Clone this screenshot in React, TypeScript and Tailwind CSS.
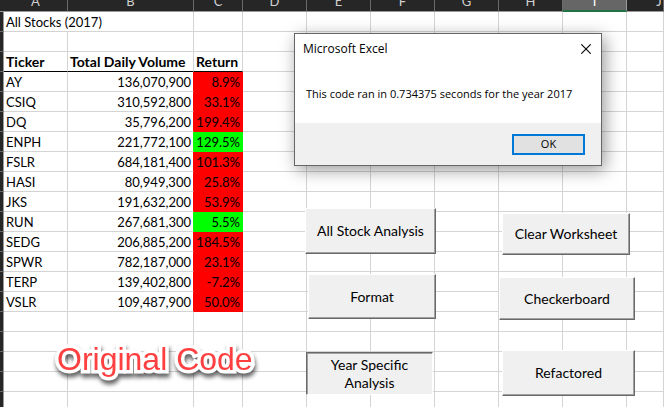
import React from "react";

type Stock = { ticker: string; volume: string; change: string; positive?: boolean };

const stocks: Stock[] = [
  { ticker: "AY", volume: "136,070,900", change: "8.9%" },
  { ticker: "CSIQ", volume: "310,592,800", change: "33.1%" },
  { ticker: "DQ", volume: "35,796,200", change: "199.4%" },
  { ticker: "ENPH", volume: "221,772,100", change: "129.5%", positive: true },
  { ticker: "FSLR", volume: "684,181,400", change: "101.3%" },
  { ticker: "HASI", volume: "80,949,300", change: "25.8%" },
  { ticker: "JKS", volume: "191,632,200", change: "53.9%" },
  { ticker: "RUN", volume: "267,681,300", change: "5.5%", positive: true },
  { ticker: "SEDG", volume: "206,885,200", change: "184.5%" },
  { ticker: "SPWR", volume: "782,187,000", change: "23.1%" },
  { ticker: "TERP", volume: "139,402,800", change: "-7.2%" },
  { ticker: "VSLR", volume: "109,487,900", change: "50.0%" },
];

const columns = ["A", "B", "C", "D", "E", "F", "G", "H", "I", "J"];
const selectedColumn = "I";

const cell = "h-5 border-r border-b border-[#d4d4d4] p-0";
const textCell = cell + " pt-px pl-0.5";
const headingCell =
  "h-5 border-r border-b border-r-[#d4d4d4] border-b-black p-0 pt-px pl-0.5 text-sm leading-[18px] font-bold whitespace-nowrap";

function EmptyCells({ count }: { count: number }) {
  return (
    <>
      {Array.from({ length: count }, (_, i) => (
        <td key={i} className={cell} />
      ))}
    </>
  );
}

function RowHead() {
  return <td className="h-5 border-r border-b border-r-[#9a9a9a] border-b-[#6a6a6a] bg-[#262626] p-0" />;
}

function Sheet() {
  return (
    <table className="w-full min-w-[664px] table-fixed border-separate border-spacing-0 text-[13px] leading-[18px] text-black">
      <colgroup>
        <col className="w-1" />
        <col className="w-16" />
        <col className="w-[126px]" />
        <col className="w-[49px]" />
        <col className="w-16" />
        <col className="w-16" />
        <col className="w-16" />
        <col className="w-16" />
        <col className="w-16" />
        <col className="w-16" />
        <col />
      </colgroup>
      <thead>
        <tr>
          <td className="border-b border-[#9a9a9a] bg-[#262626] p-0" />
          {columns.map((name) => (
            <th
              key={name}
              scope="col"
              className={
                name === selectedColumn
                  ? "border-r border-b-2 border-r-[#9a9a9a] border-b-[#217346] bg-[#666666] p-0 font-normal text-white"
                  : "border-r border-b border-r-[#6a6a6a] border-b-[#9a9a9a] bg-[#262626] p-0 font-normal text-[#d0d0d0]"
              }
            >
              <div
                className={
                  name === selectedColumn
                    ? "flex h-2.5 items-end justify-center overflow-hidden leading-[17px]"
                    : name === "J"
                      ? "flex h-[11px] w-16 items-end justify-center overflow-hidden leading-[19px]"
                      : "flex h-[11px] items-end justify-center overflow-hidden leading-[19px]"
                }
              >
                {name}
              </div>
            </th>
          ))}
        </tr>
      </thead>
      <tbody>
        <tr>
          <RowHead />
          <td colSpan={2} className={textCell}>All Stocks (2017)</td>
          <EmptyCells count={8} />
        </tr>
        <tr>
          <RowHead />
          <EmptyCells count={10} />
        </tr>
        <tr className="text-left">
          <RowHead />
          <th scope="col" className={headingCell}>Ticker</th>
          <th scope="col" className={headingCell}>Total Daily Volume</th>
          <th scope="col" className={headingCell}>Return</th>
          <EmptyCells count={7} />
        </tr>
        {stocks.map((s) => (
          <tr key={s.ticker}>
            <RowHead />
            <td className={textCell}>{s.ticker}</td>
            <td
              className={
                s.positive
                  ? "h-5 border-r border-b border-r-[#00ff00] border-b-[#d4d4d4] p-0 pt-px pr-0.5 text-right"
                  : "h-5 border-r border-b border-r-[#ff0000] border-b-[#d4d4d4] p-0 pt-px pr-0.5 text-right"
              }
            >
              {s.volume}
            </td>
            <td
              className={
                s.positive
                  ? "h-5 border-r border-b border-[#00ff00] bg-[#00ff00] p-0 pt-px pr-0.5 text-right"
                  : "h-5 border-r border-b border-[#ff0000] bg-[#ff0000] p-0 pt-px pr-0.5 text-right"
              }
            >
              {s.change}
            </td>
            <EmptyCells count={7} />
          </tr>
        ))}
        {Array.from({ length: 5 }, (_, i) => (
          <tr key={i}>
            <RowHead />
            <EmptyCells count={10} />
          </tr>
        ))}
      </tbody>
    </table>
  );
}

const raised =
  "absolute border border-t-white border-l-white border-r-[#696969] border-b-[#696969] bg-[#f0f0f0] text-sm leading-[18px] text-black shadow-[inset_-1px_-1px_0_#a0a0a0]";
const pressed =
  "absolute border border-t-[#696969] border-l-[#696969] border-r-white border-b-white bg-[#f0f0f0] text-sm leading-[18px] text-black shadow-[inset_1px_1px_0_#a0a0a0]";

function MacroButtons() {
  return (
    <>
      <button type="button" className={raised + " top-[208px] left-[305px] h-[46px] w-[131px]"}>All Stock Analysis</button>
      <button type="button" className={raised + " top-[274px] left-[308px] h-[45px] w-32"}>Format</button>
      <button type="button" className={pressed + " top-[352px] left-[306px] h-[43px] w-[127px] px-4"}>Year Specific Analysis</button>
      <button type="button" className={raised + " top-[213px] left-[502px] h-[42px] w-32"}>Clear Worksheet</button>
      <button type="button" className={raised + " top-[277px] left-[499px] h-[43px] w-[136px]"}>Checkerboard</button>
      <button type="button" className={raised + " top-[350px] left-[502px] h-[46px] w-[133px]"}>Refactored</button>
    </>
  );
}

function MessageBox() {
  return (
    <div
      role="dialog"
      aria-labelledby="message-title"
      className="absolute top-[33px] left-[294px] flex w-[308px] flex-col border border-[#666666] bg-white font-['Open_Sans','Noto_Sans',sans-serif] text-black shadow-[3px_4px_16px_rgba(0,0,0,0.4)]"
    >
      <div className="flex h-[29px] items-center justify-between pr-2.5 pl-2">
        <h1 id="message-title" className="text-xs leading-4">Microsoft Excel</h1>
        <button type="button" aria-label="Close">
          <svg width="10" height="10" viewBox="0 0 10 10" stroke="#000" strokeWidth="1.1" fill="none">
            <path d="M0.3 0.3 9.7 9.7M9.7 0.3 0.3 9.7" />
          </svg>
        </button>
      </div>
      <p className="h-[60px] pt-[23px] pl-[11px] text-[11px] leading-4 whitespace-nowrap">
        This code ran in 0.734375 seconds for the year 2017
      </p>
      <div className="flex h-[42px] items-center justify-end bg-[#f0f0f0] pr-4">
        <button type="button" className="h-[21px] w-[73px] border-2 border-[#0078d7] bg-[#e1e1e1] text-[11px] leading-4">
          OK
        </button>
      </div>
    </div>
  );
}

export default function App() {
  return (
    <main className="relative h-screen overflow-hidden bg-white font-[Lato,sans-serif]">
      <Sheet />
      <MacroButtons />
      <MessageBox />
      <div className="absolute top-[340px] left-[57px] font-['Liberation_Sans',Arial,sans-serif] text-[32px] leading-[38px] whitespace-nowrap text-[#ff4040] drop-shadow-[1px_4px_2px_rgba(0,0,0,0.6)] [-webkit-text-stroke:7px_white] [paint-order:stroke_fill]">
        Original Code
      </div>
    </main>
  );
}
